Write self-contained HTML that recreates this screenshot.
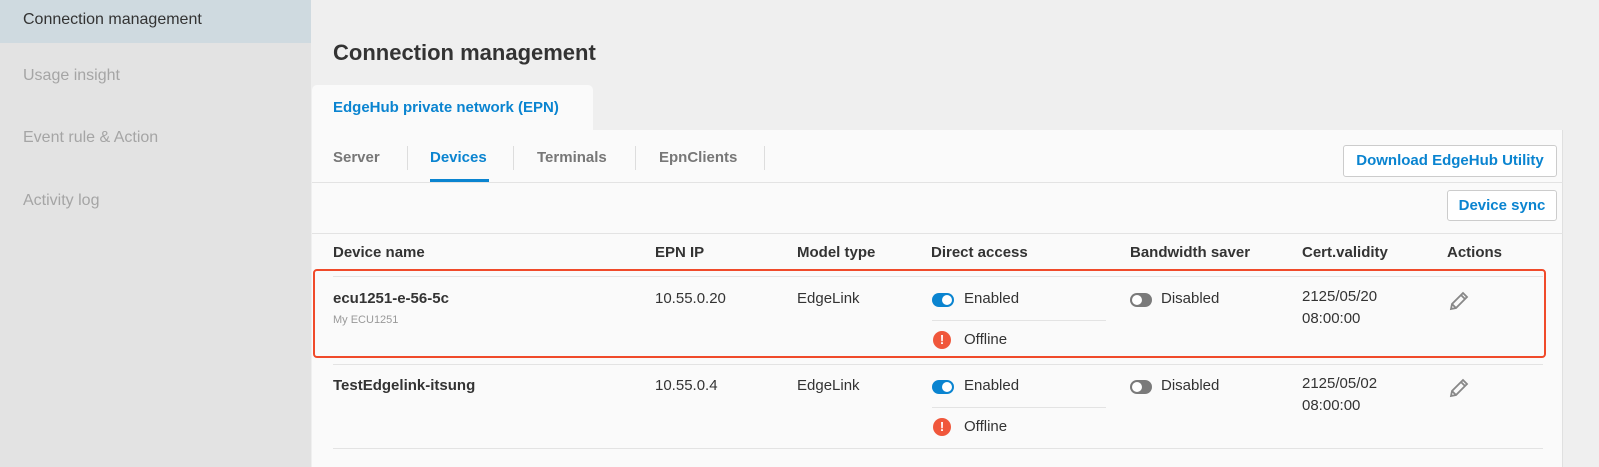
<!DOCTYPE html><html><head><style>
*{margin:0;padding:0;box-sizing:border-box}
body{width:1599px;height:467px;overflow:hidden;background:#efefef;font-family:"Liberation Sans",sans-serif;position:relative;color:#333}
.a{position:absolute;white-space:nowrap}
.side{left:0;top:0;width:311px;height:467px;background:#e3e3e3}
.nav{left:23px;font-size:16px;color:#a5a5a5}
.h{font-size:15px;font-weight:bold;color:#333}
.t{font-size:15px;color:#333}
.tog{width:22px;height:14px;border-radius:7px;background:#0a84d0}
.tog:after{content:"";position:absolute;right:2px;top:2px;width:10px;height:10px;border-radius:50%;background:#fff}
.off{background:#7a7a7a}
.off:after{left:2px;right:auto}
.ex{width:18px;height:18px;border-radius:50%;background:#f0573b;color:#fff;font-size:13px;font-weight:bold;text-align:center;line-height:18px}
.ln{height:1px;background:#e3e3e3}
.btn{border:1px solid #ccc;border-radius:3px;background:#fff;color:#0a84d0;font-weight:bold;font-size:15px;text-align:center;line-height:29px}
</style></head><body>
<div class="a side"></div>
<div class="a" style="left:0;top:0;width:311px;height:43px;background:#cfdae0"></div>
<div class="a" style="left:23px;top:11px;font-size:16px;color:#333">Connection management</div>
<div class="a nav" style="top:67px">Usage insight</div>
<div class="a nav" style="top:129px">Event rule &amp; Action</div>
<div class="a nav" style="top:192px">Activity log</div>
<div class="a" style="left:333px;top:40px;font-size:22px;font-weight:bold;color:#333">Connection management</div>
<div class="a" style="left:312px;top:85px;width:281px;height:46px;background:#fafafa;border-radius:5px 5px 0 0"></div>
<div class="a" style="left:333px;top:99px;font-size:15px;font-weight:bold;color:#0a84d0">EdgeHub private network (EPN)</div>
<div class="a" style="left:312px;top:130px;width:1251px;height:337px;background:#fafafa;border-right:1px solid #e0e0e0"></div>
<div class="a h" style="left:333px;top:149px;color:#777">Server</div>
<div class="a" style="left:407px;top:146px;width:1px;height:24px;background:#ddd"></div>
<div class="a h" style="left:430px;top:149px;color:#0a84d0">Devices</div>
<div class="a" style="left:430px;top:179px;width:59px;height:3px;background:#0a84d0"></div>
<div class="a" style="left:513px;top:146px;width:1px;height:24px;background:#ddd"></div>
<div class="a h" style="left:537px;top:149px;color:#777">Terminals</div>
<div class="a" style="left:635px;top:146px;width:1px;height:24px;background:#ddd"></div>
<div class="a h" style="left:659px;top:149px;color:#777">EpnClients</div>
<div class="a" style="left:764px;top:146px;width:1px;height:24px;background:#ddd"></div>
<div class="a ln" style="left:312px;top:182px;width:1251px"></div>
<div class="a btn" style="left:1343px;top:145px;width:214px;height:32px">Download EdgeHub Utility</div>
<div class="a btn" style="left:1447px;top:190px;width:110px;height:31px">Device sync</div>
<div class="a ln" style="left:312px;top:233px;width:1251px"></div>
<div class="a h" style="left:333px;top:244px">Device name</div>
<div class="a h" style="left:655px;top:244px">EPN IP</div>
<div class="a h" style="left:797px;top:244px">Model type</div>
<div class="a h" style="left:931px;top:244px">Direct access</div>
<div class="a h" style="left:1130px;top:244px">Bandwidth saver</div>
<div class="a h" style="left:1302px;top:244px">Cert.validity</div>
<div class="a h" style="left:1447px;top:244px">Actions</div>
<div class="a ln" style="left:333px;top:276px;width:1210px"></div>
<div class="a ln" style="left:333px;top:364px;width:1210px"></div>
<div class="a ln" style="left:333px;top:448px;width:1210px"></div>
<div class="a" style="left:313px;top:269px;width:1233px;height:89px;border:2px solid #f04a2a;border-radius:4px"></div>
<div class="a h" style="left:333px;top:290px">ecu1251-e-56-5c</div>
<div class="a" style="left:333px;top:314px;font-size:11px;color:#999">My ECU1251</div>
<div class="a t" style="left:655px;top:290px">10.55.0.20</div>
<div class="a t" style="left:797px;top:290px">EdgeLink</div>
<div class="a tog" style="left:932px;top:293px"></div>
<div class="a t" style="left:964px;top:290px">Enabled</div>
<div class="a ln" style="left:932px;top:320px;width:174px"></div>
<div class="a ex" style="left:933px;top:331px">!</div>
<div class="a t" style="left:964px;top:331px">Offline</div>
<div class="a tog off" style="left:1130px;top:293px"></div>
<div class="a t" style="left:1161px;top:290px">Disabled</div>
<div class="a t" style="left:1302px;top:286px;line-height:22px">2125/05/20<br>08:00:00</div>
<svg class="a" style="left:1448px;top:290px" width="22" height="22" viewBox="0 0 22 22"><path d="M3 19l1-5L15 3l4 4L8 18z M13 5l4 4 M4 14l4 4" fill="none" stroke="#888" stroke-width="1.8"/></svg>
<div class="a h" style="left:333px;top:377px">TestEdgelink-itsung</div>
<div class="a t" style="left:655px;top:377px">10.55.0.4</div>
<div class="a t" style="left:797px;top:377px">EdgeLink</div>
<div class="a tog" style="left:932px;top:380px"></div>
<div class="a t" style="left:964px;top:377px">Enabled</div>
<div class="a ln" style="left:932px;top:407px;width:174px"></div>
<div class="a ex" style="left:933px;top:418px">!</div>
<div class="a t" style="left:964px;top:418px">Offline</div>
<div class="a tog off" style="left:1130px;top:380px"></div>
<div class="a t" style="left:1161px;top:377px">Disabled</div>
<div class="a t" style="left:1302px;top:373px;line-height:22px">2125/05/02<br>08:00:00</div>
<svg class="a" style="left:1448px;top:377px" width="22" height="22" viewBox="0 0 22 22"><path d="M3 19l1-5L15 3l4 4L8 18z M13 5l4 4 M4 14l4 4" fill="none" stroke="#888" stroke-width="1.8"/></svg>
</body></html>
